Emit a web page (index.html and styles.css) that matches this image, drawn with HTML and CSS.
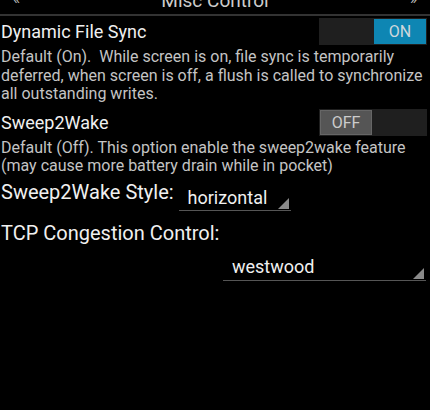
FILE: index.html
```html
<!DOCTYPE html>
<html>
<head>
	<meta charset='utf-8'>
	<title>Misc Control</title>
	<link rel="stylesheet" href="styles.css">
</head>
<body>
	<div class="screen">
		<div class="header">
			<span class="arrow">&laquo;</span>
			<span class="header-title">Misc Control</span>
			<span class="arrow">&raquo;</span>
		</div>

		<div class="pref">
			<div class="pref-row">
				<div class="pref-title">Dynamic File Sync</div>
				<div class="switch on">
					<span class="knob">ON</span>
				</div>
			</div>
			<div class="pref-desc">Default (On).&nbsp; While screen is on, file sync is temporarily deferred, when screen is off, a flush is called to synchronize all outstanding writes.</div>
		</div>

		<div class="pref">
			<div class="pref-row">
				<div class="pref-title">Sweep2Wake</div>
				<div class="switch off">
					<span class="knob">OFF</span>
				</div>
			</div>
			<div class="pref-desc">Default (Off). This option enable the sweep2wake feature (may cause more battery drain while in pocket)</div>
		</div>

		<div class="style-row">
			<span class="label">Sweep2Wake Style:</span>
			<div class="spinner small">
				<span>horizontal</span>
			</div>
		</div>

		<div class="label tcp">TCP Congestion Control:</div>
		<div class="spinner-wrap">
			<div class="spinner wide">
				<span>westwood</span>
			</div>
		</div>
	</div>
</body>
</html>
```

FILE: styles.css
```css
* {
	padding: 0;
	margin: 0;
	box-sizing: border-box;
}
body {
	background: #000;
	font-family: Roboto, "Noto Sans", sans-serif;
	color: #f0f0f0;
}
.screen {
	width: 430px;
	height: 410px;
	overflow: hidden;
}
.header {
	display: flex;
	justify-content: space-between;
	align-items: flex-end;
	height: 16px;
	padding: 0 13px;
	border-bottom: 2px solid #333;
	color: #bbb;
	font-size: 19px;
	line-height: 19px;
	overflow: hidden;
}
.header-title {
	margin-bottom: 4px;
	color: #ccc;
}
.header .arrow {
	margin-bottom: 5px;
	font-size: 15px;
}
.pref-row {
	display: flex;
	justify-content: space-between;
	align-items: center;
	height: 31px;
	padding: 0 3px 0 1px;
}
.pref-title {
	font-size: 18px;
}
.switch {
	display: flex;
	width: 108px;
	height: 27px;
	padding: 1px;
	background: #1f1f1f;
}
.switch.on {
	justify-content: flex-end;
}
.knob {
	display: flex;
	justify-content: center;
	align-items: center;
	width: 52px;
	height: 25px;
	font-size: 16px;
	color: #ddd;
}
.on .knob {
	background: #0e86b3;
	color: #cfd8dc;
}
.off .knob {
	background: #555;
	border: 1px solid #666;
	color: #ccc;
}
.pref-desc {
	padding: 1px 6px 0 1px;
	font-size: 16px;
	line-height: 18.5px;
	color: #c4c4c4;
}
.pref + .pref {
	margin-top: 3px;
}
.label {
	font-size: 20px;
}
.style-row {
	display: flex;
	align-items: flex-end;
	margin-top: 4px;
	padding-left: 1px;
}
.spinner {
	position: relative;
	border-bottom: 1px solid #555;
	font-size: 18px;
	padding: 0 0 3px 9px;
}
.spinner::after {
	content: "";
	position: absolute;
	right: 2px;
	bottom: 1px;
	border-style: solid;
	border-width: 0 0 11px 11px;
	border-color: transparent transparent #8a8a8a transparent;
}
.spinner.small {
	width: 112px;
	margin: 0 0 -7px 5px;
	padding-bottom: 2px;
}
.tcp {
	margin-top: 17px;
	padding-left: 1px;
}
.spinner-wrap {
	display: flex;
	justify-content: flex-end;
	padding: 11px 4px 0 0;
}
.spinner.wide {
	width: 203px;
}
```
